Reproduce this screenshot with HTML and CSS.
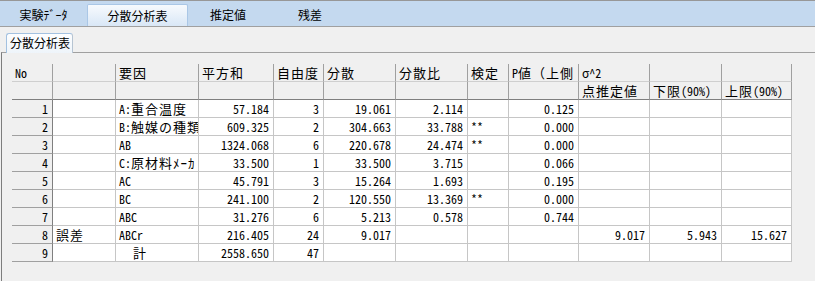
FILE: index.html
```html
<!DOCTYPE html>
<html>
<head>
    <meta charset="utf-8">
    <title>分散分析表</title>
    <link rel="stylesheet" href="styles.css">
</head>
<body>
    <div class="topbar">
        <div class="tab t1">実験ﾃﾞｰﾀ</div>
        <div class="tab t2 active">分散分析表</div>
        <div class="tab t3">推定値</div>
        <div class="tab t4">残差</div>
    </div>
    <div class="subtabs">
        <div class="subtab">分散分析表</div>
    </div>
    <div class="panel">
        <table class="grid">
            <colgroup>
                <col class="c-no"><col class="c-src"><col class="c-fac"><col class="c-ss">
                <col class="c-df"><col class="c-ms"><col class="c-f"><col class="c-test">
                <col class="c-p"><col class="c-est"><col class="c-lo"><col class="c-hi">
            </colgroup>
            <tr class="head">
                <th>No</th><th></th><th><span class="j">要因</span></th><th><span class="j">平方和</span></th>
                <th><span class="j">自由度</span></th><th><span class="j">分散</span></th><th><span class="j">分散比</span></th>
                <th><span class="j">検定</span></th><th>P<span class="j">値（上側</span></th><th>σ^2</th><th></th><th></th>
            </tr>
            <tr class="head head2">
                <th></th><th></th><th></th><th></th><th></th><th></th><th></th><th></th><th></th>
                <th><span class="j">点推定値</span></th><th><span class="j">下限</span>(90%)</th><th><span class="j">上限</span>(90%)</th>
            </tr>
            <tr>
                <td class="rh">1</td><td></td><td>A:<span class="j">重合温度</span></td><td class="r">57.184</td><td class="r">3</td>
                <td class="r">19.061</td><td class="r">2.114</td><td></td><td class="r">0.125</td><td></td><td></td><td></td>
            </tr>
            <tr>
                <td class="rh">2</td><td></td><td>B:<span class="j">触媒の種類</span></td><td class="r">609.325</td><td class="r">2</td>
                <td class="r">304.663</td><td class="r">33.788</td><td>**</td><td class="r">0.000</td><td></td><td></td><td></td>
            </tr>
            <tr>
                <td class="rh">3</td><td></td><td>AB</td><td class="r">1324.068</td><td class="r">6</td>
                <td class="r">220.678</td><td class="r">24.474</td><td>**</td><td class="r">0.000</td><td></td><td></td><td></td>
            </tr>
            <tr>
                <td class="rh">4</td><td></td><td>C:<span class="j">原材料ﾒｰｶ</span></td><td class="r">33.500</td><td class="r">1</td>
                <td class="r">33.500</td><td class="r">3.715</td><td></td><td class="r">0.066</td><td></td><td></td><td></td>
            </tr>
            <tr>
                <td class="rh">5</td><td></td><td>AC</td><td class="r">45.791</td><td class="r">3</td>
                <td class="r">15.264</td><td class="r">1.693</td><td></td><td class="r">0.195</td><td></td><td></td><td></td>
            </tr>
            <tr>
                <td class="rh">6</td><td></td><td>BC</td><td class="r">241.100</td><td class="r">2</td>
                <td class="r">120.550</td><td class="r">13.369</td><td>**</td><td class="r">0.000</td><td></td><td></td><td></td>
            </tr>
            <tr>
                <td class="rh">7</td><td></td><td>ABC</td><td class="r">31.276</td><td class="r">6</td>
                <td class="r">5.213</td><td class="r">0.578</td><td></td><td class="r">0.744</td><td></td><td></td><td></td>
            </tr>
            <tr>
                <td class="rh">8</td><td><span class="j">誤差</span></td><td>ABCr</td><td class="r">216.405</td><td class="r">24</td>
                <td class="r">9.017</td><td></td><td></td><td></td><td class="r">9.017</td><td class="r">5.943</td><td class="r">15.627</td>
            </tr>
            <tr>
                <td class="rh">9</td><td></td><td><span class="j">　計</span></td><td class="r">2558.650</td><td class="r">47</td>
                <td></td><td></td><td></td><td></td><td></td><td></td><td></td>
            </tr>
        </table>
    </div>
</body>
</html>
```

FILE: styles.css
```css
body {
    margin: 0;
    background-color: #f0f0f0;
    font-family: "Noto Sans CJK JP", sans-serif;
    font-size: 12px;
    color: #000;
}

/* top tab bar */
.topbar {
    display: flex;
    height: 22px;
    padding-top: 3px;
    background-color: #c4d9ef;
    border-top: 1px solid #979797;
    border-bottom: 1px solid #a0a0a0;
}

.tab {
    display: flex;
    align-items: center;
    justify-content: center;
    box-sizing: border-box;
    height: 22px;
    line-height: 16px;
}

.t1 { width: 87px; }
.t2 { width: 101px; }
.t3 { width: 80px; }
.t4 { width: 84px; }

.tab.active {
    border: 1px solid #aac7e6;
    border-bottom: none;
    border-radius: 2px 2px 0 0;
    background: linear-gradient(#f7fafd, #d9e7f6);
}

/* inner tab */
.subtabs {
    display: flex;
    align-items: flex-end;
    height: 25px;
    padding-left: 6px;
}

.subtab {
    position: relative;
    box-sizing: border-box;
    width: 67px;
    height: 20px;
    margin-bottom: -1px;
    padding-left: 3px;
    line-height: 18px;
    border: 1px solid #a3c1e0;
    border-right-color: #b6c4d2;
    border-bottom: none;
    border-radius: 3px 3px 0 0;
    background: linear-gradient(#fdfeff, #eef4fa);
}

.panel {
    margin-left: 1px;
    padding: 11px 0 0 10px;
    height: 217px;
    border-left: 1px solid #7d7d7d;
    border-top: 1px solid #a0a0a0;
}

/* data grid */
.grid {
    width: 780px;
    table-layout: fixed;
    border-collapse: separate;
    border-spacing: 0;
    font-family: "Noto Sans Mono CJK JP", "DejaVu Sans Mono", monospace;
    font-size: 12px;
}

.c-no { width: 41px; }
.c-src { width: 63px; }
.c-fac { width: 83px; }
.c-ss { width: 75px; }
.c-df { width: 50px; }
.c-ms { width: 72px; }
.c-f { width: 72px; }
.c-test { width: 41px; }
.c-p { width: 70px; }
.c-est { width: 71px; }
.c-lo { width: 72px; }
.c-hi { width: 70px; }

.grid th,
.grid td {
    box-sizing: border-box;
    height: 18px;
    padding: 0 3px;
    line-height: 17px;
    text-align: left;
    font-weight: normal;
    white-space: nowrap;
    overflow: hidden;
    vertical-align: middle;
}

.grid td {
    background-color: #fff;
    border-right: 1px solid #c6c6c6;
    border-bottom: 1px solid #c6c6c6;
}

.grid th {
    background-color: #f0f0f0;
    border-right: 1px solid #a0a0a0;
    border-bottom: 1px solid #cfcfcf;
}

.grid .head2 th {
    border-bottom-color: #7f7f7f;
}

.grid td.rh {
    background-color: #f0f0f0;
    text-align: right;
    padding-right: 4px;
    border-right-color: #7f7f7f;
    border-bottom-color: #a0a0a0;
}

.grid td.r {
    text-align: right;
    padding-right: 4px;
}

.j {
    font-family: "Noto Sans CJK JP", sans-serif;
    font-size: 13px;
    letter-spacing: 1px;
    line-height: 1;
}
```
